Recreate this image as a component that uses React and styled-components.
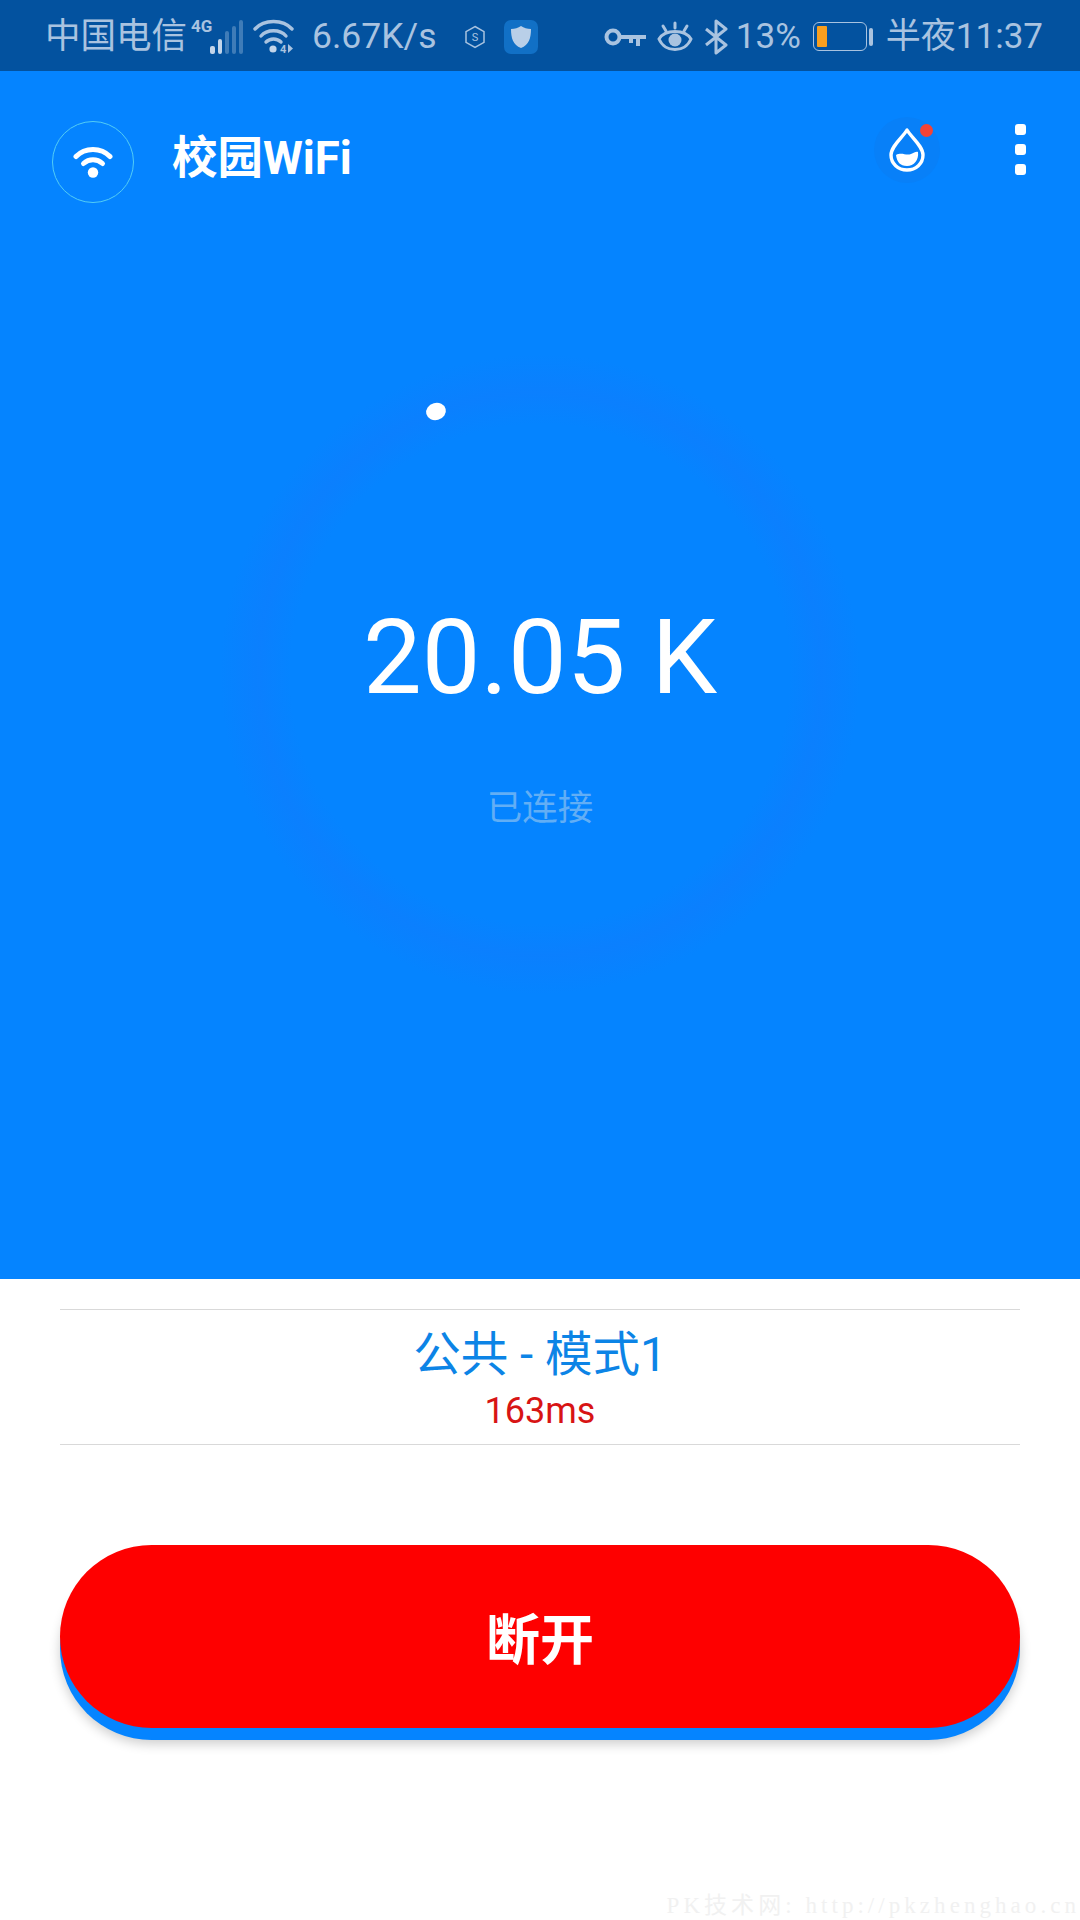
import React from 'react'
import styled, { createGlobalStyle } from 'styled-components'

const GlobalStyle = createGlobalStyle`
  html, body {
    margin: 0;
    padding: 0;
    background: #fff;
  }
  body {
    font-family: Roboto, 'Noto Sans CJK SC', sans-serif;
  }
`

const App = () => (
  <>
    <GlobalStyle />
    <Page>
      <StatusBar>
        <Carrier>中国电信</Carrier>
        <SignalIcon />
        <StatusWifiIcon />
        <Speed>6.67K/s</Speed>
        <HexIcon />
        <ShieldApp />
        <StatusRight>
          <KeyIcon />
          <EyeIcon />
          <BluetoothIcon />
          <Percent>13%</Percent>
          <Battery>
            <BatteryFill />
          </Battery>
          <BatteryNub />
          <Clock>半夜11:37</Clock>
        </StatusRight>
      </StatusBar>

      <Hero>
        <Header>
          <LogoCircle>
            <LogoWifi />
          </LogoCircle>
          <Title>校园WiFi</Title>
          <DropButton>
            <DropIcon />
            <RedDot />
          </DropButton>
          <MoreButton>
            <MoreDot />
            <MoreDot />
            <MoreDot />
          </MoreButton>
        </Header>

        <Gauge>
          <Spark />
          <Amount>20.05 K</Amount>
          <State>已连接</State>
        </Gauge>
      </Hero>

      <Info>
        <Mode>公共 - 模式1</Mode>
        <Ping>163ms</Ping>
      </Info>

      <DisconnectButton>断开</DisconnectButton>

      <Watermark>PK技术网: http://pkzhenghao.cn</Watermark>
    </Page>
  </>
)

const SignalIcon = () => (
  <SignalSvg width='54' height='44' viewBox='0 -3 54 44'>
    <text x='0' y='14' fontSize='17' fontWeight='700' fill='#a9c3e0' fontFamily='Roboto, sans-serif'>
      4G
    </text>
    <rect x='19' y='28' width='5' height='8' rx='2' fill='#c3d5ea' />
    <rect x='27' y='21' width='4' height='15' rx='2' fill='#c3d5ea' />
    <rect x='34' y='13' width='4' height='23' rx='2' fill='#3f7cb8' />
    <rect x='41' y='8' width='4' height='28' rx='2' fill='#3f7cb8' />
    <rect x='48' y='2' width='4' height='34' rx='2' fill='#3f7cb8' />
  </SignalSvg>
)

const StatusWifiIcon = () => (
  <WifiSvg width='42' height='38' viewBox='0 0 42 38'>
    <g fill='none' stroke='#a9c3e0' strokeWidth='3.4' strokeLinecap='round'>
      <path d='M2 11 C11 1 30 1 39 11' />
      <path d='M8 18 C14 11 27 11 33 18' />
      <path d='M13 24 C17 20 24 20 28 24' />
    </g>
    <circle cx='20' cy='31' r='3.6' fill='#c3d5ea' />
    <text x='27' y='35' fontSize='11' fontWeight='700' fill='#a9c3e0' fontFamily='Roboto, sans-serif'>
      4
    </text>
    <path d='M35 26v9l5-4.5z' fill='#a9c3e0' />
  </WifiSvg>
)

const HexIcon = () => (
  <HexSvg width='22' height='24' viewBox='0 0 22 24'>
    <path d='M11 1.5l9 5.2v10.6l-9 5.2-9-5.2V6.700z' fill='none' stroke='#a9c3e0' strokeWidth='1.500' />
    <text x='11' y='16' fontSize='11' fill='#a9c3e0' textAnchor='middle' fontFamily='Roboto, sans-serif'>
      S
    </text>
  </HexSvg>
)

const ShieldApp = () => (
  <AppTile>
    <svg width='22' height='24' viewBox='0 0 22 24'>
      <path d='M11 1c3 2 6 3 10 3 0 9-2 16-10 19C3 20 1 13 1 4c4 0 7-1 10-3z' fill='#b9cfe8' />
    </svg>
  </AppTile>
)

const KeyIcon = () => (
  <svg width='42' height='18' viewBox='0 0 42 18'>
    <circle cx='9' cy='9' r='6.500' fill='none' stroke='#a9c3e0' strokeWidth='4' />
    <path d='M15 7h27v4h-6v7h-4v-7h-3v4h-4v-4H15z' fill='#a9c3e0' />
  </svg>
)

const EyeIcon = () => (
  <svg width='36' height='32' viewBox='0 0 36 32'>
    <g fill='none' stroke='#a9c3e0' strokeWidth='3' strokeLinecap='round'>
      <path d='M2 18C8 8 28 8 34 18 28 32 8 32 2 18z' />
      <path d='M18 2v5M6 5l3 5M30 5l-3 5' />
    </g>
    <circle cx='18' cy='19' r='6.500' fill='#a9c3e0' />
  </svg>
)

const BluetoothIcon = () => (
  <svg width='24' height='36' viewBox='0 0 24 36'>
    <path d='M2 10l20 16-10 8V2l10 8L2 26' fill='none' stroke='#a9c3e0' strokeWidth='3' strokeLinejoin='round' />
  </svg>
)

const LogoWifi = () => (
  <svg width='40' height='32' viewBox='0 0 40 32'>
    <g fill='none' stroke='#fff' strokeWidth='5' strokeLinecap='round'>
      <path d='M3 10.500C12 1 28 1 37 10.500' />
      <path d='M10.500 17.500C16 12.500 24 12.500 29.500 17.500' />
    </g>
    <circle cx='20' cy='26.500' r='5.200' fill='#fff' />
  </svg>
)

const DropIcon = () => (
  <svg width='36' height='44' viewBox='0 0 36 44'>
    <path
      d='M18 2C14 9 2 18 2 27c0 8.500 7 15 16 15s16-6.500 16-15C34 18 22 9 18 2z'
      fill='none'
      stroke='#fff'
      strokeWidth='3.400'
      strokeLinejoin='round'
    />
    <path d='M7 27c6-3 10 1 15-1 3-1 5-3 7-2 1 8-4 14-11 14S8 34 7 27z' fill='#fff' />
  </svg>
)

const Page = styled.div`
  width: 1080px;
  height: 1920px;
  display: flex;
  flex-direction: column;
  background: #fff;
  overflow: hidden;
`

const StatusBar = styled.div`
  height: 71px;
  flex: none;
  display: flex;
  align-items: center;
  padding: 2px 37px 0 45px;
  box-sizing: border-box;
  background: #03529f;
  color: #a9c3e0;
  font-size: 35px;
  line-height: 69px;
`

const Carrier = styled.span`
  font-size: 35.500px;
  width: 147px;
  white-space: nowrap;
`

const SignalSvg = styled.svg`
  flex: none;
  margin-left: -1px;
`

const WifiSvg = styled.svg`
  flex: none;
  margin-left: 8px;
`

const Speed = styled.span`
  margin-left: 17px;
  width: 126px;
  white-space: nowrap;
  font-size: 35.500px;
`

const HexSvg = styled.svg`
  flex: none;
  margin-left: 26px;
`

const AppTile = styled.div`
  width: 34px;
  height: 34px;
  margin-left: 18px;
  flex: none;
  display: flex;
  align-items: center;
  justify-content: center;
  border-radius: 7px;
  background: #1170c6;
`

const StatusRight = styled.div`
  margin-left: auto;
  display: flex;
  align-items: center;
  gap: 11px;
`

const Percent = styled.span`
  margin-left: -3px;
  font-size: 35px;
`

const Battery = styled.div`
  width: 54px;
  height: 29px;
  padding: 3px;
  margin-left: 1px;
  box-sizing: border-box;
  border: 1.500px solid #a9c3e0;
  border-radius: 6px;
  display: flex;
`

const BatteryFill = styled.div`
  width: 10px;
  background: #f99f1e;
  border-radius: 1px;
`

const BatteryNub = styled.div`
  width: 4px;
  height: 18px;
  margin-left: -9px;
  background: #a9c3e0;
  border-radius: 2px;
`

const Clock = styled.span`
  margin-left: 2px;
  white-space: nowrap;
  font-size: 35px;
`

const Hero = styled.div`
  height: 1208px;
  flex: none;
  display: flex;
  flex-direction: column;
  background: #0584ff;
`

const Header = styled.div`
  display: flex;
  align-items: flex-start;
  padding: 46px 54px 0 52px;
`

const LogoCircle = styled.div`
  width: 82px;
  height: 82px;
  margin-top: 4px;
  flex: none;
  box-sizing: border-box;
  display: flex;
  align-items: center;
  justify-content: center;
  border: 1px solid #53cdf5;
  border-radius: 50%;
`

const Title = styled.div`
  margin: 12px 0 0 38px;
  color: #fff;
  font-size: 45.500px;
  font-weight: 700;
  line-height: 60px;
  white-space: nowrap;
`

const DropButton = styled.div`
  position: relative;
  width: 66px;
  height: 66px;
  margin-left: auto;
  flex: none;
  display: flex;
  align-items: center;
  justify-content: center;
  border-radius: 50%;
  background: #0880f8;
`

const RedDot = styled.div`
  position: absolute;
  top: 7px;
  right: 7px;
  width: 13px;
  height: 13px;
  border-radius: 50%;
  background: #f44336;
`

const MoreButton = styled.div`
  margin: 7px 0 0 75px;
  display: flex;
  flex-direction: column;
  gap: 9px;
`

const MoreDot = styled.div`
  width: 11px;
  height: 11px;
  border-radius: 3px;
  background: #fff;
`

const Gauge = styled.div`
  position: relative;
  width: 640px;
  height: 640px;
  margin: 151px auto 0;
  display: flex;
  flex-direction: column;
  align-items: center;
  border-radius: 50%;
  background: radial-gradient(
    circle closest-side,
    rgba(35, 110, 250, 0) 0,
    rgba(35, 110, 250, 0) 78%,
    rgba(35, 110, 250, 0.2) 88%,
    rgba(35, 110, 250, 0.1) 94%,
    rgba(35, 110, 250, 0) 100%
  );
`

const Spark = styled.div`
  position: absolute;
  top: 49px;
  left: 206px;
  width: 20px;
  height: 17px;
  border-radius: 50%;
  background: #fff;
  transform: rotate(-15deg);
`

const Amount = styled.div`
  margin-top: 240px;
  color: #fff;
  font-size: 104.500px;
  line-height: 127px;
  white-space: nowrap;
`

const State = styled.div`
  margin-top: 60px;
  color: #62aef5;
  font-family: 'Noto Sans CJK SC', sans-serif;
  font-size: 35.500px;
  line-height: 48px;
`

const Info = styled.div`
  margin: 30px 60px 0;
  height: 136px;
  flex: none;
  box-sizing: border-box;
  display: flex;
  flex-direction: column;
  align-items: center;
  border-top: 1px solid #d9d9d9;
  border-bottom: 1px solid #d9d9d9;
`

const Mode = styled.div`
  margin-top: 14px;
  color: #0c84e6;
  font-size: 47.500px;
  line-height: 62px;
  white-space: nowrap;
`

const Ping = styled.div`
  margin-top: 4px;
  color: #d81414;
  font-size: 36px;
  line-height: 42px;
`

const DisconnectButton = styled.div`
  margin: 100px 60px 0;
  height: 183px;
  flex: none;
  display: flex;
  align-items: center;
  justify-content: center;
  border-radius: 92px;
  background: #fe0000;
  box-shadow: 0 12px 0 #0584ff, 0 16px 12px rgba(0, 0, 0, 0.2);
  color: #fff;
  font-size: 54px;
  font-weight: 700;
`

const Watermark = styled.div`
  margin-top: auto;
  align-self: flex-end;
  color: #f1f1f1;
  font-family: 'Liberation Serif', 'Noto Sans CJK SC', serif;
  font-size: 23px;
  letter-spacing: 4.050px;
  line-height: 29px;
  white-space: nowrap;
`

export default App
